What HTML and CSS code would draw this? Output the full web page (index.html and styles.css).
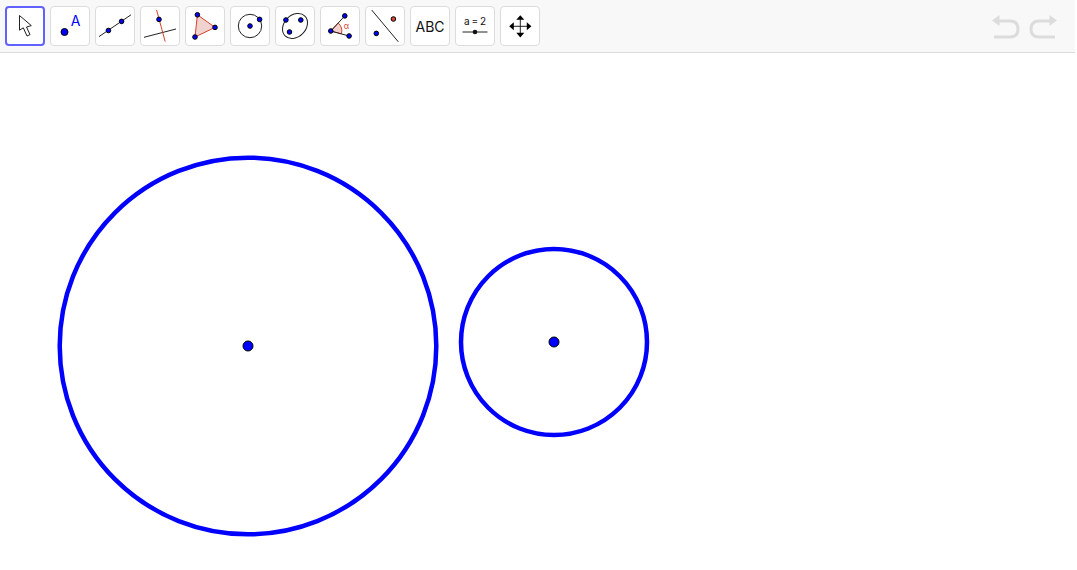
FILE: index.html
```html
<!DOCTYPE html>
<html lang="en">
<head>
  <meta charset="UTF-8">
  <meta name="viewport" content="width=device-width, initial-scale=1.0">
  <title>Geometry</title>
  <link rel="stylesheet" href="styles.css">
</head>
<body>
  <header class="toolbar">
    <div class="tools">
      <button type="button" class="tool selected" aria-label="Move">
        <svg viewBox="2 2 36 36">
          <path class="line" d="M14.5 9.5V24.2L18.3 21.8L22 30L25 28.6L21.5 21L26.3 19.6Z"/>
        </svg>
      </button>
      <button type="button" class="tool" aria-label="Point">
        <svg viewBox="1 1 38 38">
          <circle class="dot" cx="14.5" cy="26" r="3.5"/>
          <text class="label-point" x="25.5" y="20">A</text>
        </svg>
      </button>
      <button type="button" class="tool" aria-label="Line">
        <svg viewBox="1 1 38 38">
          <path class="line" d="M4 30.6L36 8.8"/>
          <circle class="dot" cx="13.4" cy="24.5" r="2.3"/>
          <circle class="dot" cx="26.6" cy="15.4" r="2.3"/>
        </svg>
      </button>
      <button type="button" class="tool" aria-label="Perpendicular Line">
        <svg viewBox="1 1 38 38">
          <path class="line" d="M4 31.3L36 23"/>
          <path class="line red" d="M16.6 4L25.2 35.6"/>
          <circle class="dot" cx="19" cy="13.4" r="2.3"/>
        </svg>
      </button>
      <button type="button" class="tool" aria-label="Polygon">
        <svg viewBox="1 1 38 38">
          <path class="line red area" d="M12.4 8.8L30 21.4L10 31Z"/>
          <circle class="dot" cx="12.4" cy="8.8" r="2.3"/>
          <circle class="dot" cx="30" cy="21.4" r="2.3"/>
          <circle class="dot" cx="10" cy="31" r="2.3"/>
        </svg>
      </button>
      <button type="button" class="tool" aria-label="Circle with Center">
        <svg viewBox="1 1 38 38">
          <circle class="line" cx="20" cy="20" r="11.7"/>
          <circle class="dot" cx="20" cy="20" r="2.3"/>
          <circle class="dot" cx="29.6" cy="13.4" r="2.3"/>
        </svg>
      </button>
      <button type="button" class="tool" aria-label="Ellipse">
        <svg viewBox="1 1 38 38">
          <ellipse class="line" cx="20" cy="20" rx="14" ry="10.8" transform="rotate(-45 20 20)"/>
          <circle class="dot" cx="10.9" cy="14" r="2.3"/>
          <circle class="dot" cx="25.8" cy="14" r="2.3"/>
          <circle class="dot" cx="14.5" cy="26" r="2.3"/>
        </svg>
      </button>
      <button type="button" class="tool" aria-label="Angle">
        <svg viewBox="1 1 38 38">
          <path class="line red area" d="M10.8 25L18.2 17A11 11 0 0 1 21.4 27.9Z"/>
          <path class="line" d="M24.8 9.9L10.8 25L29.1 30"/>
          <circle class="dot" cx="24.8" cy="9.9" r="2.3"/>
          <circle class="dot" cx="10.8" cy="25" r="2.3"/>
          <circle class="dot" cx="29.1" cy="30" r="2.3"/>
          <text class="label-angle" x="26.3" y="23">α</text>
        </svg>
      </button>
      <button type="button" class="tool" aria-label="Reflect about Line">
        <svg viewBox="1 1 38 38">
          <path class="line" d="M6.7 4L33.3 35.8"/>
          <circle class="dot" cx="11.3" cy="27.4" r="2.3"/>
          <circle class="dot dot-red" cx="28.4" cy="13" r="2.3"/>
        </svg>
      </button>
      <button type="button" class="tool" aria-label="Text">
        <svg viewBox="1 1 38 38">
          <text class="label-text" x="20" y="25.5">ABC</text>
        </svg>
      </button>
      <button type="button" class="tool" aria-label="Slider">
        <svg viewBox="1 1 38 38">
          <text class="label-slider" x="20" y="19">a&thinsp;=&thinsp;2</text>
          <path class="line" d="M7.5 26H32.5"/>
          <circle class="handle" cx="20" cy="26" r="2.3"/>
        </svg>
      </button>
      <button type="button" class="tool" aria-label="Move Graphics View">
        <svg viewBox="1 1 38 38">
          <path class="line" d="M20.3 12V28M12 20.3H28"/>
          <path d="M20.3 9.2L24.3 13.8H16.3ZM20.3 31.4L24.3 26.8H16.3ZM9.2 20.3L13.8 16.3V24.3ZM31.4 20.3L26.8 16.3V24.3Z"/>
        </svg>
      </button>
    </div>
    <div class="history">
      <button type="button" class="history-button" aria-label="Undo">
        <svg viewBox="0 0 28 24">
          <path class="arrow-line" d="M7 7H18C23 7 26 9.5 26 15S23 23 18 23H2"/>
          <path class="arrow-head" d="M0 6.5L7.5 1V12Z"/>
        </svg>
      </button>
      <button type="button" class="history-button" aria-label="Redo">
        <svg viewBox="0 0 28 24">
          <path class="arrow-line" d="M21 7H10C5 7 2 9.5 2 15S5 23 10 23H26"/>
          <path class="arrow-head" d="M28 6.5L20.5 1V12Z"/>
        </svg>
      </button>
    </div>
  </header>

  <main class="canvas">
    <svg class="drawing" role="img" aria-label="Two circles with their centers">
      <circle class="shape" cx="248" cy="293" r="188.3" stroke-width="4.5"/>
      <circle class="shape" cx="554" cy="289" r="93" stroke-width="4.5"/>
      <circle class="dot" cx="248" cy="293" r="5"/>
      <circle class="dot" cx="554" cy="289" r="5"/>
    </svg>
  </main>
</body>
</html>
```
FILE: styles.css
```css
body {
  display: flex;
  flex-direction: column;
  min-height: 100vh;
  margin: 0;
  background-color: #fff;
  font-family: Inter, "Liberation Sans", sans-serif;
}
button {
  padding: 0;
  font-family: inherit;
  cursor: pointer;
}
svg {
  display: block;
}

/* toolbar */
.toolbar {
  display: flex;
  align-items: center;
  justify-content: space-between;
  margin-right: 2px;
  padding: 6px 18px 6px 5px;
  background-color: #f8f8f8;
  border-bottom: 1px solid #dcdcdc;
}
.tools {
  display: flex;
  gap: 5px;
}
.tool {
  display: flex;
  box-sizing: border-box;
  width: 40px;
  height: 40px;
  background-color: #fff;
  border: 1px solid #dcdcdc;
  border-radius: 4px;
}
.tool svg {
  width: 100%;
  height: 100%;
}
.tool.selected {
  border: 2px solid #6161ff;
}
.history {
  display: flex;
  gap: 9px;
}
.history-button {
  background: none;
  border: none;
}
.history-button svg {
  width: 28px;
  height: 24px;
  overflow: visible;
}

/* icons */
.line {
  fill: none;
  stroke: #222;
  stroke-width: 1;
}
.red {
  stroke: #d8402f;
}
.area {
  fill: #f0d3ce;
}
.dot {
  fill: #00f;
  stroke: #000;
  stroke-width: 1;
}
.dot-red {
  fill: #db4437;
}
.handle {
  fill: #111;
}
.arrow-line {
  fill: none;
  stroke: #dcdcdc;
  stroke-width: 3;
}
.arrow-head {
  fill: #dcdcdc;
}
text {
  text-anchor: middle;
}
.label-point {
  fill: #00f;
  font-size: 14px;
}
.label-angle {
  fill: #d8402f;
  font-size: 8px;
}
.label-text {
  fill: #111;
  font-size: 14px;
}
.label-slider {
  fill: #111;
  font-size: 10px;
}

/* drawing area */
.canvas {
  display: flex;
  flex: 1;
}
.drawing {
  flex: 1;
}
.shape {
  fill: none;
  stroke: #00f;
}
```
